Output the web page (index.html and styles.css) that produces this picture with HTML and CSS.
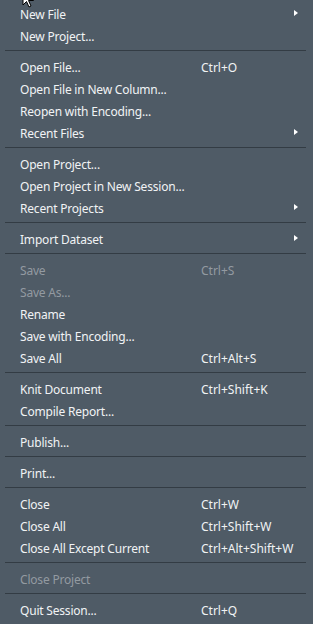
FILE: index.html
```html
<!DOCTYPE html>
<html lang="en">
<head>
    <meta charset="UTF-8">
    <meta name="viewport" content="width=device-width, initial-scale=1.0">
    <title>File Menu</title>
    <link rel="stylesheet" href="styles.css">
</head>
<body>
    <div class="menu">
        <div class="item has-sub"><span class="label">New File</span><span class="arrow"></span></div>
        <div class="item"><span class="label">New Project...</span></div>
        <div class="sep"></div>
        <div class="item"><span class="label">Open File...</span><span class="key">Ctrl+O</span></div>
        <div class="item"><span class="label">Open File in New Column...</span></div>
        <div class="item"><span class="label">Reopen with Encoding...</span></div>
        <div class="item has-sub"><span class="label">Recent Files</span><span class="arrow"></span></div>
        <div class="sep"></div>
        <div class="item"><span class="label">Open Project...</span></div>
        <div class="item"><span class="label">Open Project in New Session...</span></div>
        <div class="item has-sub"><span class="label">Recent Projects</span><span class="arrow"></span></div>
        <div class="sep"></div>
        <div class="item has-sub"><span class="label">Import Dataset</span><span class="arrow"></span></div>
        <div class="sep"></div>
        <div class="item disabled"><span class="label">Save</span><span class="key">Ctrl+S</span></div>
        <div class="item disabled"><span class="label">Save As...</span></div>
        <div class="item"><span class="label">Rename</span></div>
        <div class="item"><span class="label">Save with Encoding...</span></div>
        <div class="item"><span class="label">Save All</span><span class="key">Ctrl+Alt+S</span></div>
        <div class="sep"></div>
        <div class="item"><span class="label">Knit Document</span><span class="key">Ctrl+Shift+K</span></div>
        <div class="item"><span class="label">Compile Report...</span></div>
        <div class="sep"></div>
        <div class="item"><span class="label">Publish...</span></div>
        <div class="sep"></div>
        <div class="item"><span class="label">Print...</span></div>
        <div class="sep"></div>
        <div class="item"><span class="label">Close</span><span class="key">Ctrl+W</span></div>
        <div class="item"><span class="label">Close All</span><span class="key">Ctrl+Shift+W</span></div>
        <div class="item"><span class="label">Close All Except Current</span><span class="key">Ctrl+Alt+Shift+W</span></div>
        <div class="sep"></div>
        <div class="item disabled"><span class="label">Close Project</span></div>
        <div class="sep"></div>
        <div class="item"><span class="label">Quit Session...</span><span class="key">Ctrl+Q</span></div>
    </div>

    <!-- mouse pointer, only its tail shows at the top edge -->
    <svg class="cursor" width="14" height="20" viewBox="0 0 14 20">
        <path d="M1 1 L1 15 L4.5 11.5 L7 17 L9 16 L6.5 10.5 L11.5 10.5 Z" fill="#fff" stroke="#000" stroke-width="1"/>
    </svg>
</body>
</html>
```

FILE: styles.css
```css
body {
    margin: 0;
    background-color: #4f5b66;
    font-family: "Noto Sans", "DejaVu Sans", sans-serif;
    font-size: 12px;
    letter-spacing: -0.2px;
    color: #f1f3f5;
}
.menu {
    padding: 3px 0;
}
.item {
    position: relative;
    display: flex;
    align-items: center;
    height: 22px;
    padding-left: 20px;
}
.label {
    width: 181px;
    white-space: nowrap;
}
.key {
    white-space: nowrap;
    letter-spacing: 0;
}
.disabled {
    color: #939aa1;
}
.arrow {
    position: absolute;
    left: 294px;
    top: 7px;
    width: 0;
    height: 0;
    border-top: 3.5px solid transparent;
    border-bottom: 3.5px solid transparent;
    border-left: 4px solid #fff;
}
.sep {
    height: 9px;
    margin: 0 7px 0 5px;
    box-sizing: border-box;
    padding-top: 3px;
}
.sep::before {
    content: "";
    display: block;
    height: 1px;
    background-color: #333c44;
}
.cursor {
    position: absolute;
    left: 22px;
    top: -10px;
}
```
